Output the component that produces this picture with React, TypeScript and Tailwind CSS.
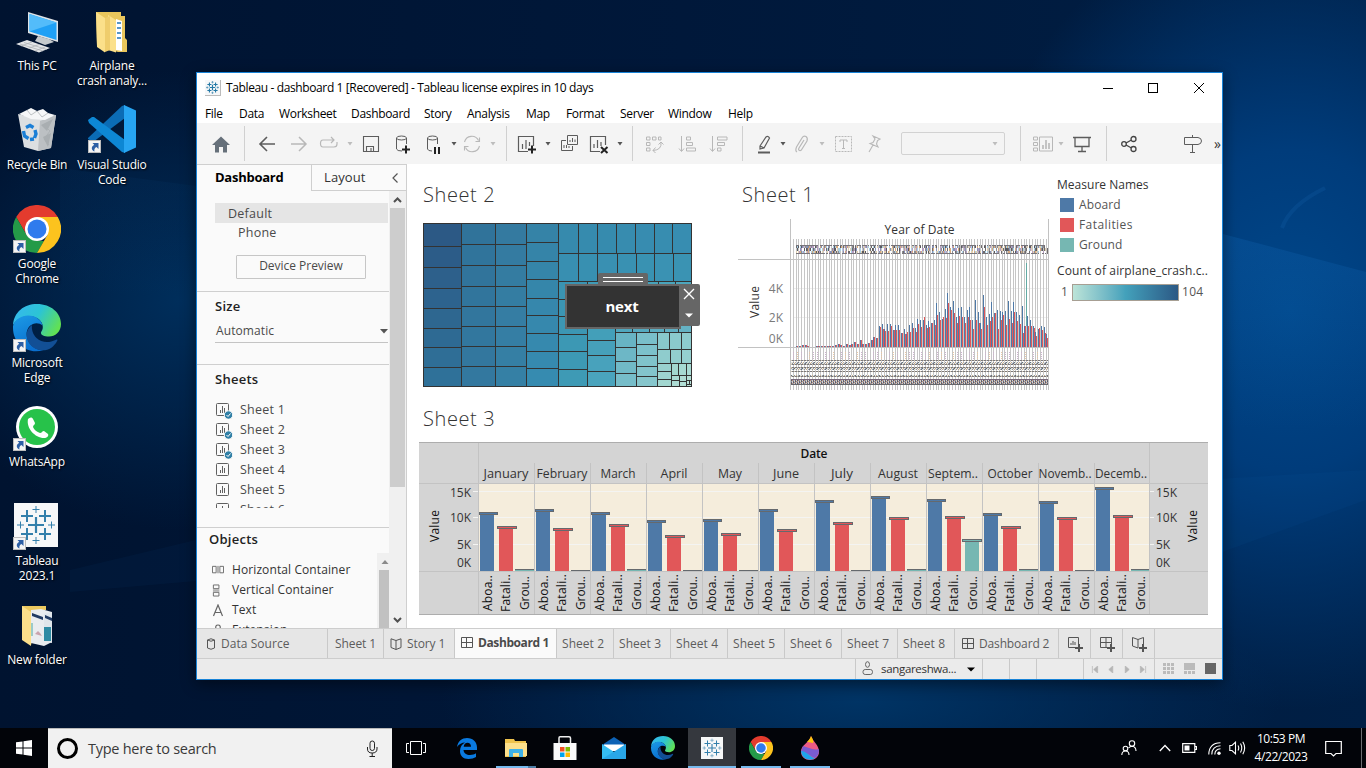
import React from "react";

/* ---------- shared icons ---------- */

const PLUS_MARKS: [number, number, number, number][] = [
  [22, 22, 8, 2.2], [13, 13, 6, 2], [31, 13, 6, 2], [13, 31, 6, 2], [31, 31, 6, 2],
  [22, 6.5, 3.5, 1], [22, 37.5, 3.5, 1], [6.5, 22, 3.5, 1], [37.5, 22, 3.5, 1],
];

function TableauMark({ className, color = "#337fab", weight = 1 }: { className: string; color?: string; weight?: number }) {
  return (
    <svg viewBox="0 0 44 44" className={className}>
      <rect width="44" height="44" fill="#f6f7f8" />
      {PLUS_MARKS.map(([x, y, r, w], i) => (
        <path key={i} d={`M${x - r} ${y}H${x + r}M${x} ${y - r}V${y + r}`} stroke={color} strokeWidth={w * weight} />
      ))}
    </svg>
  );
}

function ChromeIcon({ className }: { className: string }) {
  return (
    <svg viewBox="0 0 48 48" className={className}>
      <path d="M3.2 12A24 24 0 0 1 44.8 12H24L13.6 30Z" fill="#e33b2e" />
      <path d="M3.2 12 13.6 30 24 36H31L24 48A24 24 0 0 1 3.2 12Z" fill="#249a48" />
      <path d="M34.4 30 24 48A24 24 0 0 0 44.8 12H24Z" fill="#fcc31e" />
      <circle cx="24" cy="24" r="12" fill="#fff" />
      <circle cx="24" cy="24" r="9.5" fill="#2f7bed" />
    </svg>
  );
}

function EdgeIcon({ className, id }: { className: string; id: string }) {
  return (
    <svg viewBox="0 0 48 48" className={className}>
      <defs>
        <linearGradient id={`${id}a`} x1="0" x2="1" y1="0.2" y2="0.6">
          <stop offset="0" stopColor="#35b8ee" />
          <stop offset="0.5" stopColor="#2cc4d4" />
          <stop offset="1" stopColor="#62e152" />
        </linearGradient>
        <linearGradient id={`${id}b`} x1="0" x2="0.4" y1="0" y2="1">
          <stop offset="0" stopColor="#1c9be6" />
          <stop offset="1" stopColor="#0a6fcf" />
        </linearGradient>
      </defs>
      <path d="M0 21C1 8 11 0 24 0c14 0 24 9 24 20 0 8-6 12.500-12 12.500-5 0-8-1.500-8-3.500 0-1.500 1.800-2.500 1.800-6C29.800 17 24 12 16 12 9 12 3 16 0 21Z" fill={`url(#${id}a)`} />
      <path d="M0 22c2-7 9-10.500 15-10.500 8 0 14 5 14.500 10C27 19.500 23.500 18.500 20 20c-5 2-8 8-5.500 15 2.500 7 9 11.500 16 11C16 51 0 41 0 24Z" fill={`url(#${id}b)`} />
      <path d="M19 21c-6 4-7 12-3 18 5 8 16 9 22 5 3-2 6-6 6.500-8-.5-.8-1.500-.3-2 0-6 3-14 3-19-2-4-4-5-9-4.500-13Z" fill="#124f95" />
    </svg>
  );
}

function ShortcutArrow() {
  return (
    <svg viewBox="0 0 13 13" className="absolute bottom-0 left-0 h-[13px] w-[13px]">
      <rect x=".5" y=".5" width="12" height="12" fill="#f4f4f4" stroke="#bcbcbc" />
      <path d="M4.500 3h6v6L8.500 7C6.500 8 6 9.500 6.500 11.500 3.500 10.500 2.500 7 6.200 4.800Z" fill="#2d5fa5" />
    </svg>
  );
}

function DesktopIcon({ className, shortcut, tight, label, children }: { className: string; shortcut?: boolean; tight?: boolean; label: string[]; children: React.ReactNode }) {
  return (
    <div className={`absolute flex w-[76px] flex-col items-center ${className}`}>
      <div className="relative h-12 w-12">
        {children}
        {shortcut && <ShortcutArrow />}
      </div>
      <div className={`text-center text-[12px] leading-[15px] tracking-[-0.2px] whitespace-nowrap text-white [text-shadow:1px_1px_2px_#000] ${tight ? "mt-[3px]" : "mt-1"}`}>
        {label.map((l) => (
          <div key={l}>{l}</div>
        ))}
      </div>
    </div>
  );
}

function Desktop() {
  return (
    <>
      <DesktopIcon className="top-[6px] left-[-1px]" label={["This PC"]}>
        <svg viewBox="0 0 48 48" className="h-12 w-12">
          <path d="M15 6 45 15V36L15 27Z" fill="#dfe3e6" />
          <path d="M16.500 8 43.500 16.500V34L16.500 25.500Z" fill="#1fa0f5" />
          <path d="M16.500 8 43.500 16.500 16.500 25.500Z" fill="#53bcfa" />
          <path d="M25 30 36 33 41 36 32 39 22 35Z" fill="#c5cacd" />
          <path d="M3 38 14 34 37 42 26 46.500Z" fill="#e4e6e8" />
          <path d="M7 38 30 45M11 36.500 34 43.500M8 40 19 36M15 42.500 26 38.500M22 45 32 41" stroke="#a9adb1" strokeWidth=".7" />
        </svg>
      </DesktopIcon>
      <DesktopIcon className="top-[6px] left-[74px]" label={["Airplane", "crash analy..."]}>
        <svg viewBox="0 0 48 48" className="h-12 w-12">
          <path d="M8 6H33V10H37V32L39 34V46H30L9 40Z" fill="#e9c65c" />
          <path d="M28 13 34 15V45L28 44Z" fill="#fff" />
          <path d="M29 17h4M29 22h4M29 27h4M29 32h4" stroke="#5796c7" strokeWidth="2" />
          <path d="M20 9 28 14V46.500L20 44Z" fill="#fbe08a" />
          <path d="M8 6 17 12V46.500L9 41Z" fill="#fbe08a" />
          <path d="M17 12 22 10V44L17 46Z" fill="#efcd6c" />
        </svg>
      </DesktopIcon>
      <DesktopIcon className="top-[105px] left-[-1px]" label={["Recycle Bin"]}>
        <svg viewBox="0 0 48 48" className="h-12 w-12">
          <path d="M5 9 24 14 43 10 38 43 25 46 11 42Z" fill="#dcdfe1" />
          <path d="M27 16 43 10 38 43 25 46Z" fill="#bcc0c3" />
          <path d="M6 9 14 5 18 3 24 6 30 4 35 8 42 10 32 15 18 14Z" fill="#f6f7f8" />
          <path d="M14 5 18 10 24 6 29 12 35 8M31 20 37 26 31 34 36 40" fill="none" stroke="#a6abae" strokeWidth=".7" />
          <path d="M28 20 40 14 34 26ZM30 32 38 28 35 42Z" fill="#a9aeb1" />
          <path d="M13 22.500 17 20.500 20.500 22.500M22 25 23 29 21.500 33M10.500 26 11.500 31 15.500 33.500M17 34.500 21 34" fill="none" stroke="#1b7fd6" strokeWidth="3.400" />
        </svg>
      </DesktopIcon>
      <DesktopIcon className="top-[105px] left-[74px]" shortcut label={["Visual Studio", "Code"]}>
        <svg viewBox="0 0 48 48" className="h-12 w-12">
          <path d="M0 33 34 1 37 0V13L5 37 0 34Z" fill="#0b6cb5" />
          <path d="M0 15 4 12H6L37 35V48L34 47 1 18Z" fill="#0d87d4" />
          <path d="M36 0 48 5.500V42.500L36 48Z" fill="#27a5f2" />
        </svg>
      </DesktopIcon>
      <DesktopIcon className="top-[205px] left-[-1px]" shortcut tight label={["Google", "Chrome"]}>
        <ChromeIcon className="h-12 w-12" />
      </DesktopIcon>
      <DesktopIcon className="top-[304px] left-[-1px]" shortcut tight label={["Microsoft", "Edge"]}>
        <EdgeIcon className="h-12 w-12" id="desk" />
      </DesktopIcon>
      <DesktopIcon className="top-[403px] left-[-1px]" shortcut tight label={["WhatsApp"]}>
        <svg viewBox="0 0 48 48" className="h-12 w-12">
          <circle cx="24" cy="24" r="21" fill="#fff" />
          <circle cx="24" cy="24" r="18" fill="#27c24a" />
          <path d="M15 16c2-2 4-2 5 0l2 4c0 2-2 2-2 4 1 3 4 5 7 6 2 0 2-2 4-2l4 3c1 2-1 4-4 4-9 0-18-10-16-19Z" fill="#fff" />
        </svg>
      </DesktopIcon>
      <DesktopIcon className="top-[502px] left-[-1px]" shortcut tight label={["Tableau", "2023.1"]}>
        <TableauMark className="mt-px ml-px h-11 w-11" />
      </DesktopIcon>
      <DesktopIcon className="top-[601px] left-[-1px]" tight label={["New folder"]}>
        <svg viewBox="0 0 48 48" className="h-12 w-12">
          <path d="M9 5H33V9H28L18 44 9 38Z" fill="#ecc95f" />
          <path d="M18 9 28 8 39 11V41L31 45 18 42Z" fill="#e9ecef" />
          <path d="M31 13 39 11V42L31 40Z" fill="#dfe5ea" />
          <path d="M19 12 30 16V19L19 15ZM32 14 39 17V20L32 17Z" fill="#213a63" />
          <path d="M31 26H38V40H31Z" fill="#2f8ba4" />
          <path d="M19 22V35" stroke="#7fc0bd" strokeWidth="1.500" />
          <path d="M22 33 25 30 27 32 29 35Z" fill="#c9a3ad" />
          <path d="M9 5 18 11V45L9 39Z" fill="#fbdf8b" />
        </svg>
      </DesktopIcon>
    </>
  );
}

/* ---------- window chrome ---------- */

function TitleBar() {
  return (
    <div className="flex h-[30px] shrink-0 items-center bg-white pl-2 text-[12px] text-black">
      <TableauMark className="h-[16px] w-[16px] border-r border-b border-[#bbb]" color="#2378a6" weight={1.6} />
      <span className="ml-[5px] text-[12px] tracking-[-0.38px] whitespace-nowrap">Tableau - dashboard 1 [Recovered] - Tableau license expires in 10 days</span>
      <div className="ml-auto flex pr-[17px]">
        <svg className="mr-[33px] h-3 w-3" viewBox="0 0 12 12"><path d="M1 6.500H11" stroke="#000" /></svg>
        <svg className="mr-[34px] h-3 w-3" viewBox="0 0 12 12"><rect x="1.500" y="1.500" width="9" height="9" fill="none" stroke="#000" /></svg>
        <svg className="h-3 w-3" viewBox="0 0 12 12"><path d="M1 1 11 11M11 1 1 11" stroke="#000" /></svg>
      </div>
    </div>
  );
}

function MenuBar() {
  const items: [string, string][] = [
    ["File", "w-[34px]"], ["Data", "w-[40px]"], ["Worksheet", "w-[72px]"], ["Dashboard", "w-[73px]"], ["Story", "w-[43px]"],
    ["Analysis", "w-[59px]"], ["Map", "w-[40px]"], ["Format", "w-[54px]"], ["Server", "w-[48px]"], ["Window", "w-[60px]"], ["Help", "w-[40px]"],
  ];
  return (
    <div className="flex h-5 shrink-0 items-center bg-white pt-[2px] pl-2 text-[12px] tracking-[-0.32px] text-black">
      {items.map(([t, w]) => (
        <span key={t} className={`shrink-0 ${w}`}>{t}</span>
      ))}
    </div>
  );
}

function Ico({ ml, children, tone = "dark" }: { ml: string; children: React.ReactNode; tone?: "dark" | "dim" }) {
  return (
    <svg viewBox="0 0 20 20" className={`h-5 w-5 shrink-0 fill-none stroke-current ${tone === "dark" ? "text-[#5c5c5c]" : "text-[#b8b8b8]"} ${ml}`}>
      {children}
    </svg>
  );
}

function Caret({ ml, dim }: { ml: string; dim?: boolean }) {
  return (
    <svg viewBox="0 0 6 4" className={`h-1 w-[6px] shrink-0 ${ml}`}>
      <path d="M.5 0h5L3 3.500Z" fill={dim ? "#bdbdbd" : "#555"} />
    </svg>
  );
}

function Sep({ ml }: { ml: string }) {
  return <div className={`h-[35px] w-px shrink-0 bg-[#d0d0d0] ${ml}`} />;
}

function Toolbar() {
  return (
    <div className="flex h-[41px] shrink-0 items-center overflow-hidden bg-[#f4f4f4]">
      <Ico ml="ml-[14px]"><path d="M10 2.500 19 11H16V18.500H12V13H8V18.500H4V11H1Z" fill="#66707a" stroke="none" /></Ico>
      <Sep ml="ml-[13px]" />
      <Ico ml="ml-3"><path d="M18 10H3M10 3 3 10 10 17" strokeWidth="1.600" /></Ico>
      <Ico ml="ml-3" tone="dim"><path d="M2 10H17M10 3 17 10 10 17" strokeWidth="1.500" /></Ico>
      <Ico ml="ml-[10px]" tone="dim"><path d="M15 6H4Q1.500 6 1.500 9.500 1.500 13 4 13H15Q18 13 18 10V8M12 3 15 6 12 9" strokeWidth="1.200" /></Ico>
      <Caret ml="ml-2" dim />
      <Ico ml="ml-2"><path d="M2.500 2.500H17.500V17.500H2.500ZM5.500 17V12.500H12.500V17M10 14V17" strokeWidth="1.100" /></Ico>
      <Ico ml="ml-[13px]"><ellipse cx="7.500" cy="4" rx="5" ry="2" /><path d="M2.500 4V15Q3 17 8 17M12.500 4V10" /><path d="M8 15.500H16M12 11.500V19.500" stroke="#222" strokeWidth="2" /></Ico>
      <Ico ml="ml-[11px]"><ellipse cx="7.500" cy="4" rx="5" ry="2" /><path d="M2.500 4V15Q3 17 7 17M12.500 4V10" /><path d="M10 13V20M14 13V20" stroke="#222" strokeWidth="2" /></Ico>
      <Caret ml="ml-[6px]" />
      <Ico ml="ml-[5px]" tone="dim"><path d="M2.500 8A7.500 7.500 0 0 1 16.500 6.500M17.500 12A7.500 7.500 0 0 1 3.500 13.500M17.500 3.500V7.500H13.500M2.500 16.500V12.500H6.500" strokeWidth="1.100" /></Ico>
      <Caret ml="ml-2" dim />
      <Sep ml="ml-[10px]" />
      <Ico ml="ml-[10px]"><path d="M11 17.500H1.500V2.500H16.500V12M5.500 15V10M9 15V6M12.500 12V8" strokeWidth="1.200" /><path d="M11 15.500H19M15 11.500V19.500" stroke="#222" strokeWidth="2" /></Ico>
      <Caret ml="ml-2" />
      <Ico ml="ml-2"><path d="M8.500 1.500H18.500V10.500H8.500ZM7 6.500H2.500V16.500H13.500V12M11 8V6M13.500 8V4M16 8V5.500M5 14V11M7.500 14V11M10 14V12" /></Ico>
      <Ico ml="ml-[10px]"><path d="M11 17.500H1.500V2.500H16.500V11M5 14V10M8.500 14V6M12 12V8" strokeWidth="1.200" /><path d="M12 13 18.500 19M18.500 13 12 19" stroke="#222" strokeWidth="2" /></Ico>
      <Caret ml="ml-2" />
      <Sep ml="ml-[9px]" />
      <Ico ml="ml-3" tone="dim"><path d="M1.500 3H5V6H1.500ZM7.500 3H11V6H7.500ZM13.500 3H16V6H13.500ZM1.500 8.500H5V11.500H1.500ZM1.500 14H5V17H1.500ZM16 8Q17 16 8 16.500M13.500 10.500 16 8 18.500 10.500M10.500 13.500 8 16.500 10.500 19" /></Ico>
      <Ico ml="ml-3" tone="dim"><path d="M4.500 2V17M2 14.500 4.500 17.500 7 14.500M9.500 3H13.500V6H9.500ZM9.500 8.500H15.500V11.500H9.500ZM9.500 14H18.500V17H9.500Z" /></Ico>
      <Ico ml="ml-3" tone="dim"><path d="M3.500 2V17M1 14.500 3.500 17.500 6 14.500M8.500 3H18V6H8.500ZM8.500 8.500H15.500V11.500H8.500ZM8.500 14H12V17H8.500Z" /></Ico>
      <Sep ml="ml-[13px]" />
      <Ico ml="ml-3"><path d="M5 12 11 3Q13 1.500 14.500 4L9 14 5 15ZM5 12 9 14" strokeWidth="1.200" /><path d="M3 18.500H15" strokeWidth="2" /></Ico>
      <Caret ml="ml-[5px]" />
      <Ico ml="ml-[6px]" tone="dim"><path d="M12 6 7 14Q6 16 7.500 16.500 9 17 10 15L15 7Q16 4 14 2.500 11.500 1.500 10 4L4.500 13Q3 17 5 18" strokeWidth="1.200" /></Ico>
      <Caret ml="ml-[7px]" dim />
      <Ico ml="ml-2" tone="dim"><path d="M2.500 2.500H18.500V17.500H2.500Z" strokeDasharray="2 1" /><path d="M7 8V6H14V8M10.500 6V14.500M9 14.500H12" /></Ico>
      <Ico ml="ml-[12px]" tone="dim"><path d="M8 2 15 5 12.500 6.500 11.500 10 13 13 5 9.500 8 8.500 10 5ZM8 11 4 18" strokeWidth="1.100" /></Ico>
      <div className="ml-4 flex h-[23px] w-[104px] shrink-0 items-center justify-end rounded-[2px] border border-[#d2d2d2] pr-[6px]"><Caret ml="ml-0" dim /></div>
      <Sep ml="ml-[15px]" />
      <Ico ml="ml-3" tone="dim"><path d="M.5 3H4.500V6H.5ZM.5 8.500H4.500V11.500H.5ZM.5 14H4.500V17H.5ZM6.500 3H19.500V17H6.500Z" /><path d="M10 15V11M13 15V6M16 15V9" strokeWidth="1.600" /></Ico>
      <Caret ml="ml-[5px]" dim />
      <Ico ml="ml-[8px]"><path d="M1 3.500H19M3 4V12.500H17V4M10 13V17.500M6 17.500H14" strokeWidth="1.300" /></Ico>
      <Sep ml="ml-[14px]" />
      <Ico ml="ml-3"><g stroke="#444" strokeWidth="1.300"><circle cx="5" cy="10" r="2.300" /><circle cx="14.500" cy="5" r="2.500" /><circle cx="14.500" cy="15" r="2.500" /><path d="M7 9 12 6.200M7 11 12 13.800" /></g></Ico>
      <Ico ml="ml-11"><path d="M1.500 3.500H15Q18.500 4 18.500 7 18.500 10 15 10.500H1.500ZM9.500 1V3.500M9.500 11V18.500M7 18.500H12" /></Ico>
      <span className="ml-[11px] w-[10px] text-[14px] leading-none text-[#333]">»</span>
    </div>
  );
}

/* ---------- side pane ---------- */

function SheetGlyph({ used }: { used?: boolean }) {
  return (
    <svg viewBox="0 0 17 18" className="h-[18px] w-[17px] shrink-0">
      <rect x=".5" y="2.500" width="12" height="12" rx="1" fill="none" stroke="#5f5f5f" />
      <path d="M4.500 12V9M6.500 12V5M8.500 12V7" stroke="#5f5f5f" />
      {used && <><circle cx="12.500" cy="14" r="4.200" fill="#2f7fa6" stroke="#fafafa" /><path d="M10.500 14 12 15.500 14.500 12.500" fill="none" stroke="#fff" /></>}
    </svg>
  );
}

function SidePane() {
  return (
    <div className="flex w-[210px] shrink-0 flex-col border-t border-r border-[#cfcfcf] bg-[#fafafa]">
      <div className="flex h-[26px] shrink-0">
        <div className="w-[114px] pl-[18px] text-[13px] leading-[25px] font-bold tracking-[-0.25px] text-black">Dashboard</div>
        <div className="flex flex-1 items-center justify-between border-b border-l border-[#cfcfcf] pr-[7px] pl-3 text-[13px] tracking-[0.1px] text-[#333]">
          <span>Layout</span>
          <svg viewBox="0 0 8 12" className="h-3 w-2"><path d="M6.500 1.500 2 6 6.500 10.500" fill="none" stroke="#555" strokeWidth="1.200" /></svg>
        </div>
      </div>
      <div className="flex min-h-0 flex-1">
        <div className="flex w-[192px] shrink-0 flex-col overflow-hidden text-[12.500px] tracking-[0.25px] text-[#4a4a4a]">
          <div className="mt-[12px] mr-px ml-[18px] h-5 shrink-0 bg-[#e5e5e5] pl-[13px] leading-[21px]">Default</div>
          <div className="h-5 shrink-0 pl-[41px] leading-5">Phone</div>
          <div className="mt-3 ml-[39px] h-6 w-[130px] shrink-0 rounded-[1px] border border-[#c6c6c6] text-center text-[12px] leading-[20px] tracking-[-0.02px]">Device Preview</div>
          <div className="mt-3 h-[74px] shrink-0 border-y border-[#cfcfcf] pt-[5px] pl-[18px]">
            <div className="text-[13px] leading-[18px] font-semibold text-[#222]">Size</div>
            <div className="mt-[5px] mr-px flex h-[23px] items-center justify-between border-b border-[#c4c4c4] pl-px text-[12px] tracking-[0.1px]">
              <span className="leading-[20px]">Automatic</span>
              <svg viewBox="0 0 8 5" className="h-[5px] w-2"><path d="M0 0h8L4 4.500Z" fill="#555" /></svg>
            </div>
          </div>
          <div className="h-[163px] shrink-0 border-b border-[#cfcfcf] pt-[5px] pl-[18px]">
            <div className="text-[13px] leading-[18px] font-semibold text-[#222]">Sheets</div>
            <div className="mt-[12px] h-[108px] overflow-hidden">
              {[1, 2, 3, 4, 5, 6].map((n) => (
                <div key={n} className="flex h-5 items-center gap-2 pl-px"><SheetGlyph used={n < 4} />
                  <span className="-ml-px leading-5">Sheet {n}</span>
                </div>
              ))}
            </div>
          </div>
          <div className="flex min-h-0 flex-1 flex-col">
            <div className="pt-px pl-3 text-[13px] leading-[20px] font-semibold text-[#222]">Objects</div>
            <div className="flex min-h-0 flex-1">
              <div className="mt-[11px] min-w-0 flex-1 overflow-hidden pl-[15px] text-[12px] tracking-[0.1px] whitespace-nowrap text-[#333]">
                <div className="flex h-5 items-center gap-2"><svg viewBox="0 0 13 13" className="h-[13px] w-3 shrink-0"><path d="M.5 2H4.500V9H.5ZM8.500 2H12.500V9H8.500Z" fill="none" stroke="#666" /><path d="M5 1.500H8V9.500H5Z" fill="#b5b5b5" /></svg>Horizontal Container</div>
                <div className="flex h-5 items-center gap-2"><svg viewBox="0 0 13 13" className="h-[13px] w-3 shrink-0"><path d="M1.500 .5H7.500V4.500H1.500ZM1.500 8.500H7.500V12.500H1.500Z" fill="none" stroke="#666" /><path d="M1 5H8V8H1Z" fill="#b5b5b5" /></svg>Vertical Container</div>
                <div className="flex h-5 items-center gap-2"><svg viewBox="0 0 12 13" className="h-[13px] w-3 shrink-0"><path d="M1.500 12 6 1 10.500 12M3 8.500H9" fill="none" stroke="#666" strokeWidth="1.200" /></svg>Text</div>
                <div className="flex h-5 items-center gap-2"><svg viewBox="0 0 12 13" className="h-[13px] w-3 shrink-0"><path d="M1 12V5H4Q3 1 6 1T8 5H11V12Z" fill="none" stroke="#666" strokeWidth="1.200" /></svg>Extension</div>
              </div>
              <div className="mt-[4px] flex w-3 shrink-0 flex-col bg-[#f0f0f0] pl-[2px]">
                <svg viewBox="0 0 10 17" className="h-[17px] w-[10px]"><path d="M2.500 11H9.500L6 7Z" fill="#8a8a8a" /></svg>
                <div className="flex-1 bg-[#c1c1c1]" />
              </div>
            </div>
          </div>
        </div>
        <div className="flex w-[17px] shrink-0 flex-col bg-[#f0f0f0] pr-px pl-px">
          <svg viewBox="0 0 15 17" className="h-[17px] w-[15px] shrink-0"><path d="M4 11 7.500 7.500 11 11" fill="none" stroke="#505050" strokeWidth="2" /></svg>
          <div className="h-[279px] shrink-0 bg-[#cdcdcd]" />
          <svg viewBox="0 0 15 17" className="mt-auto h-[17px] w-[15px] shrink-0"><path d="M4 7 7.500 10.500 11 7" fill="none" stroke="#505050" strokeWidth="2" /></svg>
        </div>
      </div>
    </div>
  );
}

/* ---------- treemap ---------- */

type Cell = [number, number, number, number, string];

function mix(a: string, b: string, t: number) {
  const p = (s: string, i: number) => parseInt(s.slice(i, i + 2), 16);
  return "rgb(" + [1, 3, 5].map((i) => Math.round(p(a, i) + (p(b, i) - p(a, i)) * t)).join(",") + ")";
}

function stack(x0: number, x1: number, ys: number[], a: string, b: string): Cell[] {
  return ys.slice(1).map((y, i) => [x0, ys[i], x1 - x0, y - ys[i], mix(a, b, i / Math.max(1, ys.length - 2))]);
}

function strip(y0: number, y1: number, xs: number[], a: string, b: string): Cell[] {
  return xs.slice(1).map((x, i) => [xs[i], y0, x - xs[i], y1 - y0, mix(a, b, i / Math.max(1, xs.length - 2))]);
}

const CELLS: Cell[] = [
  ...stack(0, 38, [0, 23, 44, 65, 85, 105, 124, 144, 163], "#2c5985", "#2f7199"),
  ...stack(38, 72, [0, 21, 42, 63, 83, 103, 123, 143, 163], "#30739a", "#33789f"),
  ...stack(72, 103, [0, 21, 42, 63, 83, 103, 123, 143, 163], "#347aa0", "#3580a5"),
  ...stack(103, 135, [0, 19, 38, 56, 75, 92, 110, 128, 145, 163], "#3583a7", "#368bb0"),
  ...strip(0, 30, [135, 155, 174, 193, 212, 231, 249, 268], "#368aad", "#378db1"),
  ...strip(30, 58, [135, 155, 174, 194, 213, 231, 250, 268], "#388fb1", "#3a93b3"),
  ...stack(135, 164, [58, 76, 93, 111, 128, 146, 163], "#3a94b2", "#3e9ab5"),
  ...stack(164, 192, [58, 82, 100, 117, 132, 148, 163], "#3f9bb6", "#4aa4bd"),
  ...strip(58, 85, [192, 209, 235, 252, 268], "#42a0b8", "#4da6bd"),
  ...strip(85, 109, [192, 209, 226, 241, 255, 268], "#50a7be", "#65b2c4"),
  ...stack(192, 213, [109, 124, 138, 150, 163], "#68b4c4", "#76bdc9"),
  ...stack(213, 234, [109, 121, 132, 143, 153, 163], "#79bfca", "#86c6cc"),
  ...strip(109, 126, [234, 246, 258, 268], "#88c8cc", "#8dcbce"),
  ...strip(126, 140, [234, 247, 258, 268], "#8fcccd", "#95cfcf"),
  ...stack(234, 248, [140, 148, 156, 163], "#99d1cf", "#a2d7d0"),
  ...strip(140, 152, [248, 255, 263, 268], "#a3d7d0", "#a8dad3"),
  ...stack(248, 256, [152, 157, 163], "#a9dad3", "#addcd4"),
  ...stack(256, 263, [152, 158, 163], "#aedcd4", "#b2dfd6"),
  ...stack(263, 268, [152, 157, 161, 163], "#b2dfd6", "#b9e3d9"),
  [263, 157, 3, 4, "#b9e3d9"],
];

function Treemap() {
  return (
    <div className="relative h-[164px] w-[269px]">
      <svg viewBox="0 0 269 164" className="h-[164px] w-[269px]">
        {CELLS.map(([x, y, w, h, f], i) => (
          <rect key={i} x={x + 0.5} y={y + 0.5} width={w} height={h} fill={f} stroke="#333" />
        ))}
      </svg>
      <div className="absolute top-[50px] left-[142px] w-[135px]">
        <div className="ml-[33px] flex h-[12px] w-[50px] flex-col justify-center gap-[3px] rounded-t-[2px] bg-[#666] px-[5px]">
          <div className="h-px bg-white" />
          <div className="h-px bg-white" />
        </div>
        <div className="-mt-px flex">
          <div className="h-[45px] w-[116px] border-2 border-[#666] bg-[#333] pr-[2px] text-center text-[15px] leading-[41px] font-bold tracking-[-0.2px] text-white">next</div>
          <div className="-ml-[2px] flex h-[42px] w-[21px] flex-col items-center justify-between rounded-r-[2px] bg-[#666] py-1 pr-[2px]">
            <svg viewBox="0 0 12 12" className="h-3 w-3"><path d="M1 1 11 11M11 1 1 11" stroke="#fff" strokeWidth="1.400" /></svg>
            <svg viewBox="0 0 8 8" className="mb-[2px] h-2 w-2"><path d="M0 1.500h8L4 5.500Z" fill="#fff" /></svg>
          </div>
        </div>
      </div>
    </div>
  );
}

/* ---------- yearly chart ---------- */

const EARLY = [0, 0, 1, 1, 2, 2, 1, 0, 0, 1, 1, 1, 1, 1, 1, 1, 2, 3, 2, 1, 3, 2, 3, 5, 3, 7, 3, 3, 4, 7, 10, 9];
const BLUE = [21, 23, 18, 23, 23, 17, 22, 22, 14, 18, 13, 22, 24, 19, 28, 27, 27, 22, 26, 24, 27, 44, 35, 28, 38, 54, 40, 46, 30, 39, 40, 30, 37, 40, 27, 47, 35, 24, 52, 30, 33, 45, 34, 37, 36, 35, 36, 46, 36, 45, 35, 32, 41, 21, 31, 27, 21, 15, 18, 21, 20, 13];
const RED = [20, 18, 16, 16, 21, 17, 17, 17, 14, 13, 15, 15, 19, 15, 23, 20, 30, 19, 20, 24, 22, 32, 27, 30, 29, 44, 37, 34, 24, 31, 30, 24, 30, 27, 18, 27, 24, 18, 40, 22, 26, 30, 34, 18, 27, 32, 22, 28, 24, 35, 26, 23, 14, 21, 21, 21, 19, 11, 19, 17, 14, 9];
const SMEAR = ["#6f6a6a", "#8793b8", "#d8a87c", "#8c8c92", "#a9d0e6", "#e2cfae", "#59595f", "#b59bc0"];

function YearChart() {
  const x = (i: number) => Math.round(52 + i * 2.745);
  const n = EARLY.length + BLUE.length;
  const seed = (a: number) => Math.abs(Math.floor(Math.sin(a * 12.9898) * 43758.5453));
  return (
    <svg viewBox="0 0 312 172" className="h-[172px] w-[312px] font-['Open_Sans',sans-serif]" shapeRendering="crispEdges">
      <path d="M56 69.500H310M56 98.500H310" stroke="#eee" />
      {Array.from({ length: n }, (_, i) => (
        <rect key={i} x={x(i) + 3} y={20} width={1} height={151} fill="#c6c6c6" />
      ))}
      {EARLY.map((h, i) => (
        <g key={i}>
          <rect x={x(i) + 1} y={128 - h} width={1} height={h} fill="#4e79a7" />
          <rect x={x(i) + 2} y={128 - h} width={1} height={h} fill="#e15759" />
        </g>
      ))}
      {BLUE.map((h, i) => (
        <g key={i}>
          <rect x={x(i + 32) + 1} y={128 - h} width={1} height={h} fill="#4e79a7" />
          <rect x={x(i + 32) + 2} y={128 - RED[i]} width={1} height={RED[i]} fill="#e15759" />
        </g>
      ))}
      <rect x="288" y="44" width="1" height="63" fill="#62aaa4" />
      {Array.from({ length: 252 }, (_, i) =>
        [26, 27, 28, 29, 30, 31, 32, 33, 34].map((y, k) => {
          const s = seed(i * 17 + Math.floor(k / 3) * 5);
          const edge = k === 0 || k === 8;
          return s % 10 < (edge ? 8 : 6) ? <rect key={`${i}-${y}`} x={58 + i} y={y} width={1} height={1} fill={edge ? "#77747a" : SMEAR[s % 8]} /> : null;
        })
      )}
      {Array.from({ length: 258 }, (_, i) =>
        [133, 135, 137, 139].map((y) => (i % 16 === 6 || i % 16 === 10 || i % 16 === 2 ? <rect key={`${i}-${y}`} x={53 + i} y={y} width={1} height={1} fill={i % 3 ? "#cdb2cf" : "#ecc9a4"} /> : null))
      )}
      {Array.from({ length: 258 }, (_, i) =>
        [141, 143, 144, 145, 148, 149, 150, 152, 156, 157].map((y, k) => {
          const c = i % 8;
          const dark = y === 141 || y === 145 || y === 148 || y === 152 || y === 157;
          const fill = dark ? (i % 3 ? "#78787c" : "#c9bda9") : ["#6d6d72", "#cfe6f2", "#f2e2c4", "#8a93a8", "#f7f4ec", "#c9a98a", "#d9eef6", "#a5a5ad"][(c + k) % 8];
          return <rect key={`${i}-${y}`} x={53 + i} y={y} width={1} height={1} fill={fill} />;
        })
      )}
      {Array.from({ length: 258 }, (_, i) =>
        [160, 161, 162, 163, 164, 165].map((y, k) => {
          const fill = k === 0 ? "#77687a" : k === 5 ? "#66666b" : ["#6b6370", "#c9d3db", "#5c5c63", "#b98f7c", "#8f9ab4", "#d9cdb8"][(i + k * 2) % 6];
          return <rect key={`${i}-${y}`} x={53 + i} y={y} width={1} height={1} fill={fill} />;
        })
      )}
      <path d="M52.500 0V171M310.500 0V171M0 40.500H311M0 128.500H311" stroke="#c2c2c2" fill="none" />
      <text x="181.500" y="15" textAnchor="middle" fontSize="12" textLength="70" fill="#333">Year of Date</text>
      <g fontSize="12" fill="#7a7a7a" textAnchor="end">
        <text x="45" y="74">4K</text>
        <text x="45" y="103">2K</text>
        <text x="45" y="124">0K</text>
      </g>
      <text transform="translate(20.500 83) rotate(-90)" textAnchor="middle" fontSize="12" textLength="32" fill="#333">Value</text>
    </svg>
  );
}

function Legend() {
  const rows: [string, string][] = [["Aboard", "bg-[#4e79a7]"], ["Fatalities", "bg-[#e15759]"], ["Ground", "bg-[#76b7b2]"]];
  return (
    <div className="pt-[11px] text-[12px] text-[#333]">
      <div className="h-5 leading-5 tracking-[0.02px]">Measure Names</div>
      {rows.map(([t, c]) => (
        <div key={t} className={`flex h-5 items-center gap-[5px] pl-[3px] text-[#555] ${t === "Fatalities" ? "tracking-[0.42px]" : "tracking-[0.1px]"}`}>
          <div className={`h-[14px] w-[14px] ${c}`} />
          {t}
        </div>
      ))}
      <div className="mt-[6px] h-5 leading-5 tracking-[0.12px] whitespace-nowrap">Count of airplane_crash.c..</div>
      <div className="mt-[2px] flex h-[18px] items-center pl-1 text-[#555]">
        <span className="w-[11px]">1</span>
        <div className="h-[17px] w-[107px] border border-[#a79f93] bg-linear-to-r from-[#bce4d8] via-[#43a1bb] to-[#2c5985]" />
        <span className="ml-[3px] tracking-[0.3px]">104</span>
      </div>
    </div>
  );
}

/* ---------- monthly chart ---------- */

const MONTHS: [string, number, number, number][] = [
  ["January", 70, 84, 127], ["February", 67, 86, 128], ["March", 70, 82, 127], ["April", 78, 93, 128],
  ["May", 77, 91, 128], ["June", 67, 87, 0], ["July", 58, 80, 128], ["August", 54, 75, 127],
  ["Septem..", 57, 74, 97], ["October", 71, 84, 127], ["Novemb..", 59, 75, 128], ["Decemb..", 45, 73, 127],
];
const MONTH_WIDTHS = [45, 51, 35, 27, 24, 26, 22, 40, 50, 45, 53, 52];

function MonthChart() {
  return (
    <svg viewBox="0 0 789 173" className="h-[173px] w-[789px] font-['Open_Sans',sans-serif]">
      <g shapeRendering="crispEdges">
        <rect width="789" height="173" fill="#d4d4d4" />
        <rect x="60" y="42" width="670" height="87" fill="#f5eddc" />
        <path d="M60 49.500H730M60 75.500H730M60 102.500H730M54 49.500H59M54 75.500H59M54 102.500H59M731 49.500H735M731 75.500H735M731 102.500H735" stroke="#f4f4f2" />
        {MONTHS.map(([m, b, r, g], i) => {
          const x = 59 + i * 56;
          return (
            <g key={m}>
              <rect x={x + 2} y={b + 2} width="14" height={127 - b} fill="#4e79a7" />
              <rect x={x + 21} y={r + 2} width="14" height={127 - r} fill="#e15759" />
              <rect x={x + 1.5} y={b + 0.5} width="18" height="2" fill="#4e79a7" stroke="#65696d" />
              <rect x={x + 19.5} y={r + 0.5} width="19" height="2" fill="#e15759" stroke="#65696d" />
              {g === 97 && <><rect x={x + 39} y="99" width="14" height="30" fill="#76b7b2" /><rect x={x + 36.5} y="97.500" width="19" height="2" fill="#76b7b2" stroke="#65696d" /></>}
              {g > 120 && <rect x={x + 37} y={g} width="19" height="1" fill="#65696d" />}
              {g === 127 && <rect x={x + 37} y="128" width="19" height="1" fill="#76b7b2" />}
            </g>
          );
        })}
        {MONTHS.map(([m], i) => (
          <rect key={m} x={59 + i * 56} y={i ? 21 : 0} width="1" height={i ? 151 : 172} fill="#c3c3c3" />
        ))}
        <path d="M730.500 0V172M0 41.500H789M0 129.500H789" stroke="#c3c3c3" />
        <path d="M0 .5H789M0 172.500H789" stroke="#adadad" />
      </g>
      <g fontSize="12" fill="#111">
        <text x="395" y="16" textAnchor="middle" fontWeight="600" textLength="27">Date</text>
        {MONTHS.map(([m], i) => {
          const c = 87 + i * 56 - (m.endsWith("..") ? 1 : 0);
          return (
            <g key={m}>
              <text x={c} y="36" textAnchor="middle" fill="#333" fontSize="12.500" textLength={MONTH_WIDTHS[i]} lengthAdjust="spacingAndGlyphs">{m}</text>
              {["Aboa..", "Fatali..", "Grou.."].map((t, k) => (
                <text key={t} transform={`translate(${59 + i * 56 + [14, 32, 51][k]} ${[169, 170, 168][k]}) rotate(-90)`} textLength={[36, 38, 34][k]}>{t}</text>
              ))}
            </g>
          );
        })}
        {["15K", "10K", "5K", "0K"].map((t, i) => (
          <g key={t} fill="#333">
            <text x="52" y={[55, 80, 107, 125][i]} textAnchor="end" textLength={i < 2 ? 21 : 14}>{t}</text>
            <text x="737" y={[55, 80, 107, 125][i]} textLength={i < 2 ? 21 : 14}>{t}</text>
          </g>
        ))}
        <text transform="translate(20 84) rotate(-90)" textAnchor="middle" textLength="32">Value</text>
        <text transform="translate(778 84) rotate(-90)" textAnchor="middle" textLength="32">Value</text>
      </g>
    </svg>
  );
}

function Canvas() {
  return (
    <div className="flex min-w-0 flex-1 flex-col bg-white">
      <div className="flex h-[232px] shrink-0">
        <div className="w-[331px] shrink-0 pl-4">
          <h2 className="h-[59px] text-[20px] leading-[62px] font-light tracking-[0.6px] text-[#333]">Sheet 2</h2>
          <Treemap />
        </div>
        <div className="w-[319px] shrink-0">
          <h2 className="h-[55px] pl-1 text-[20px] leading-[62px] font-light tracking-[0.6px] text-[#333]">Sheet 1</h2>
          <YearChart />
        </div>
        <Legend />
      </div>
      <h2 className="h-[46px] shrink-0 pl-4 text-[20px] leading-[46px] font-light tracking-[0.6px] text-[#333]">Sheet 3</h2>
      <div className="pl-3"><MonthChart /></div>
    </div>
  );
}

/* ---------- tabs and status ---------- */

function GridGlyph() {
  return <svg viewBox="0 0 12 12" className="h-3 w-3 shrink-0"><path d="M.5 .5H11.500V10.500H.5ZM5.500 .5V10.500M.5 5.500H11.500" fill="none" stroke="#555" /></svg>;
}

function BookGlyph() {
  return <svg viewBox="0 0 12 12" className="h-3 w-3 shrink-0"><path d="M6 2.500 1 .8V9.500L6 11.500 11 9.500V.8ZM6 2.500V11.500" fill="none" stroke="#555" /></svg>;
}

function NewTab({ kind }: { kind: "sheet" | "dash" | "story" }) {
  return (
    <svg viewBox="0 0 16 16" className="h-4 w-4">
      <g fill="none" stroke="#555">
        {kind === "sheet" && <path d="M8 11.500H1.500V1.500H11.500V8M4 9V7M6 9V5M8 9V6" />}
        {kind === "dash" && <path d="M8 11.500H1.500V1.500H12.500V8M7 1.500V11.500M1.500 6.500H12.500" />}
        {kind === "story" && <path d="M7 3.500 1.500 1.500V10L7 12V3.500L12.500 1.500V8" />}
        <path d="M8 12H16M12 8V16" strokeWidth="2" />
      </g>
    </svg>
  );
}

function TabStrip() {
  const cell = "flex shrink-0 items-center border-r border-[#c9c9c9] bg-[#e6e6e6]";
  return (
    <div className="flex h-[31px] shrink-0 border-y border-[#cdcdcd] bg-[#e6e6e6] text-[12px] tracking-[0.05px] text-[#5c5c5c]">
      <div className={`${cell} w-[131px] gap-[6px] pl-[10px]`}>
        <svg viewBox="0 0 8 12" className="h-3 w-2"><path d="M.5 2Q4-.5 7.500 2V10Q4 12.500 .5 10ZM.5 2Q4 4.500 7.500 2" fill="none" stroke="#555" /></svg>
        Data Source
      </div>
      <div className={`${cell} w-[56px] pl-[7px] tracking-[-0.1px]`}>Sheet 1</div>
      <div className={`${cell} w-[71px] gap-[5px] pl-[6px] tracking-[-0.1px]`}><BookGlyph />Story 1</div>
      <div className="flex w-[102px] shrink-0 items-center gap-[5px] border-r border-[#c9c9c9] bg-[#fafafa] pb-[2px] pl-[6px] font-bold tracking-[-0.4px] text-[#4a4a4a]"><GridGlyph />Dashboard 1</div>
      {[2, 3, 4, 5, 6, 7, 8].map((n) => (
        <div key={n} className={`${cell} ${n === 7 ? "w-[56px]" : "w-[57px]"} pl-[5px]`}>Sheet {n}</div>
      ))}
      <div className={`${cell} w-[104px] gap-[5px] pl-[7px] tracking-[-0.15px]`}><GridGlyph />Dashboard 2</div>
      <div className={`${cell} w-8 justify-center`}><NewTab kind="sheet" /></div>
      <div className={`${cell} w-8 justify-center`}><NewTab kind="dash" /></div>
      <div className={`${cell} w-8 justify-center`}><NewTab kind="story" /></div>
    </div>
  );
}

function StatusBar() {
  return (
    <div className="flex h-5 shrink-0 bg-[#ebebeb] text-[11.500px] text-[#333]">
      <div className="w-[659px] shrink-0 border-r border-[#c9c9c9]" />
      <div className="flex w-[127px] shrink-0 items-center border-r border-[#c9c9c9] pl-[6px]">
        <svg viewBox="0 0 11 14" className="mb-[3px] h-[14px] w-[11px]"><g fill="none" stroke="#666"><ellipse cx="5.500" cy="3.500" rx="2" ry="2.800" /><rect x="1" y="8.500" width="9.500" height="5" rx="2.200" /></g></svg>
        <span className="ml-2 tracking-[-0.32px]">sangareshwa...</span>
        <svg viewBox="0 0 8 5" className="mr-[7px] ml-auto h-[5px] w-2"><path d="M0 .5h8L4 4.500Z" fill="#000" /></svg>
      </div>
      <div className="w-[27px] shrink-0 border-r border-[#c9c9c9]" />
      <div className="w-[27px] shrink-0 border-r border-[#c9c9c9]" />
      <div className="w-[47px] shrink-0 border-r border-[#c9c9c9]" />
      <div className="flex w-[71px] shrink-0 items-center gap-2 border-r border-[#c9c9c9] pl-[7px]">
        {["M1 0V8M7 0 2.500 4 7 8Z", "M6 0 1.500 4 6 8Z", "M2 0 6.500 4 2 8Z", "M7 0V8M1 0 5.500 4 1 8Z"].map((d) => (
          <svg key={d} viewBox="0 0 8 8" className="h-[7px] w-2"><path d={d} fill="#b5b5b5" stroke="#b5b5b5" strokeWidth=".8" /></svg>
        ))}
      </div>
      <div className="flex items-center gap-[10px] pb-px pl-2">
        <svg viewBox="0 0 11 11" className="h-[11px] w-[11px]"><path d="M0 0H3V3H0ZM4 0H7V3H4ZM8 0H11V3H8ZM0 4H3V7H0ZM4 4H7V7H4ZM8 4H11V7H8ZM0 8H3V11H0ZM4 8H7V11H4ZM8 8H11V11H8Z" fill="#bbb" /></svg>
        <svg viewBox="0 0 11 11" className="h-[11px] w-[11px]"><path d="M0 0H11V7H0ZM0 8H3V11H0ZM4 8H7V11H4ZM8 8H11V11H8Z" fill="#bbb" /></svg>
        <div className="h-[11px] w-[11px] bg-[#666]" />
      </div>
    </div>
  );
}

/* ---------- taskbar ---------- */

function Task({ className, bar, children }: { className: string; bar?: string; children: React.ReactNode }) {
  return (
    <div className={`relative flex shrink-0 items-center justify-center ${className}`}>
      {children}
      {bar && <div className={`absolute bottom-0 h-[2px] bg-[#76b9ed] ${bar}`} />}
    </div>
  );
}

function Taskbar() {
  return (
    <div className="flex h-10 shrink-0 bg-[#020409]">
      <div className="flex w-12 shrink-0 items-center justify-center">
        <svg viewBox="0 0 16 16" className="h-4 w-4"><path d="M0 2.300 6.500 1.400V7.500H0ZM7.500 1.200 16 0V7.500H7.500ZM0 8.500H6.500V14.600L0 13.700ZM7.500 8.500H16V16L7.500 14.800Z" fill="#fff" /></svg>
      </div>
      <div className="flex w-[344px] shrink-0 items-center border-t border-[#b9b9b9] bg-[#f1f1f1] pr-[14px] pl-[9px]">
        <div className="h-[21px] w-[21px] rounded-full border-[3px] border-black" />
        <span className="ml-[10px] text-[14.500px] tracking-[-0.26px] text-[#3a3a3a]">Type here to search</span>
        <svg viewBox="0 0 12 18" className="ml-auto h-[18px] w-3"><g fill="none" stroke="#222"><rect x="4" y="1" width="4.500" height="9.500" rx="2.200" /><path d="M1.500 7V9Q1.500 13 6.200 13T11 9V7M6.200 13V16.500M3.500 16.500H9" /></g></svg>
      </div>
      <Task className="w-12">
        <svg viewBox="0 0 20 16" className="h-4 w-5"><path d="M4.500 1.500H15.500V14.500H4.500ZM3 3.500H.5V12.500H3M17 3.500H19.500V12.500H17" fill="none" stroke="#fff" /></svg>
      </Task>
      <Task className="ml-[3px] w-12">
        <svg viewBox="0 0 20 21" className="h-[21px] w-5"><path d="M0 9C1 3 5 0 10 0c6 0 10 4 10 9.500V12H6.500c.3 3.500 3 5 6.500 5 2.500 0 4.500-.8 6-1.700V19c-2 1.300-4.500 2-7.500 2C6 21 3 17.500 3 13c0-4 2-7 5-8.500C5 4.500 2 6 0 9Zm6.700-.3H14C14 6 12.500 4.700 10.500 4.700 8.500 4.700 7 6.200 6.700 8.700Z" fill="#0a7ae0" /></svg>
      </Task>
      <Task className="w-[49px]" bar="left-[5px] w-10 bg-linear-to-r from-[#76b9ed] from-80% to-[#4d7ea6] to-80%">
        <svg viewBox="0 0 22 18" className="h-[18px] w-[22px]"><path d="M0 0H9L10 2H21V18H0Z" fill="#efc34d" /><path d="M0 4H22V17H0Z" fill="#fde08c" /><path d="M4 18V11Q4 10 5 10H17Q18 10 18 11V18H14V14H8V18Z" fill="#3fb2e8" /></svg>
      </Task>
      <Task className="w-[49px]">
        <svg viewBox="0 0 24 24" className="h-6 w-6"><path d="M6 8V2Q6 .8 7 .8H16Q17.500.8 17.500 2V8" fill="none" stroke="#eee" strokeWidth="1.500" /><path d="M.5 7H23.500V24H.5Z" fill="#fafafa" /><path d="M7 11h4.500v4.500H7Z" fill="#f25022" /><path d="M12.500 11H17v4.500h-4.500Z" fill="#7fba00" /><path d="M7 16.500h4.500V21H7Z" fill="#00a4ef" /><path d="M12.500 16.500H17V21h-4.500Z" fill="#ffb900" /></svg>
      </Task>
      <Task className="w-[49px]">
        <svg viewBox="0 0 24 22" className="h-[22px] w-6"><path d="M0 8 12 0 24 8V12H0Z" fill="#0d62b5" /><path d="M2 7.500H22V14H2Z" fill="#fff" /><path d="M0 7 12 15 24 7V22H0Z" fill="#35bdf2" /><path d="M0 22 24 7V22Z" fill="#1f96e0" opacity=".55" /></svg>
      </Task>
      <Task className="w-[49px]"><EdgeIcon className="h-6 w-6" id="task" /></Task>
      <Task className="ml-px w-12 bg-[#35383e]" bar="left-0 w-12"><TableauMark className="h-[22px] w-[22px]" /></Task>
      <Task className="w-[50px]" bar="left-[5px] w-10"><ChromeIcon className="h-6 w-6" /></Task>
      <Task className="w-12" bar="left-[4px] w-10">
        <svg viewBox="0 0 18 24" className="h-6 w-[18px]">
          <path d="M10 0C12 6 18 9 18 15.500 18 21 14 24 9 24S0 21 0 15.500C0 9 8 7 10 0Z" fill="#ee5b86" />
          <path d="M10 0C12 3 13 6 12 7 9 6 7 6 6 6 8 4 9.500 2 10 0Z" fill="#fdc50c" />
          <path d="M2 10C7 11 12 15 17.800 13 18.500 18 16 21 14 22 9 20 5 16 0 16Z" fill="#7a5bd0" />
          <path d="M0 15C5 15 8 20 14 22.500 11 24.500 1 25 0 15Z" fill="#1fa4ec" />
        </svg>
      </Task>
      <div className="ml-auto flex shrink-0 items-center text-white">
        <svg viewBox="0 0 16 16" className="h-4 w-4"><g fill="none" stroke="#fff" strokeWidth="1.100"><circle cx="11" cy="3.500" r="2.700" /><circle cx="4.500" cy="8.500" r="2.300" /><path d="M.8 15Q1 11 4.500 11 8 11 8 15M7.500 8Q9 6.200 11 6.200 15 6.500 15 11" /></g></svg>
        <svg viewBox="0 0 12 8" className="ml-[22px] h-2 w-3"><path d="M.8 7 6 1.500 11.200 7" fill="none" stroke="#fff" strokeWidth="1.300" /></svg>
        <svg viewBox="0 0 15 10" className="ml-[11px] h-[10px] w-[15px]"><path d="M.7.7H12.800V9.300H.7ZM13 3.500H14.500V6.500H13" fill="none" stroke="#fff" strokeWidth="1.200" /><path d="M2.500 2.500H7.500V7.500H2.500Z" fill="#fff" /></svg>
        <svg viewBox="0 0 13 13" className="ml-[11px] h-[13px] w-[13px]"><g fill="none" stroke="#fff" strokeWidth="1.100"><path d="M.8 12.500Q1 1 12.500 .8M3.800 12.500Q4 4 12.500 3.800M6.800 12.500Q7 7 12.500 6.800" /></g><circle cx="11" cy="11.200" r="1.700" fill="#fff" /></svg>
        <svg viewBox="0 0 17 14" className="ml-[8px] h-[14px] w-[17px]"><path d="M.8 4.500H3L6.500 1.200V12.800L3 9.500H.8ZM9 4.500Q10.500 7 9 9.500M11.500 2.500Q14 7 11.500 11.500M13.800 .8Q17.500 7 13.800 13.200" fill="none" stroke="#fff" strokeWidth="1.100" /></svg>
        <div className="ml-[7px] w-[56px] text-center text-[12px] leading-[18px] tracking-[-0.45px] whitespace-nowrap">
          <div>10:53 PM</div>
          <div>4/22/2023</div>
        </div>
        <svg viewBox="0 0 17 17" className="ml-[16px] h-[17px] w-[17px]"><path d="M.7 1.500H16.300V13.500H11L8.500 16 6 13.500H.7Z" fill="none" stroke="#fff" strokeWidth="1.200" /></svg>
        <div className="mr-1 ml-[19px] h-10 w-px bg-[#6a6c70]" />
      </div>
    </div>
  );
}

function Wallpaper() {
  return (
    <svg viewBox="0 0 1366 728" className="absolute inset-0 h-[728px] w-[1366px]">
      <defs>
        <linearGradient id="beam" x1="0" x2="0" y1="0" y2="1">
          <stop offset="0" stopColor="#1a78cc" stopOpacity=".2" />
          <stop offset="1" stopColor="#1a78cc" stopOpacity="0" />
        </linearGradient>
      </defs>
      <path d="M1200 228 1366 272V430H1200Z" fill="url(#beam)" />
      <path d="M1200 480 1366 470V500L1200 560Z" fill="#0a62b0" opacity=".08" />
      <path d="M60 168 196 186V300H60Z" fill="url(#beam)" opacity=".25" />
      <path d="M70 592 196 581V540L70 570Z" fill="#1a78cc" opacity=".05" />
      <path d="M1282 228Q1290 205 1325 188" fill="none" stroke="#2a86d8" strokeOpacity=".12" strokeWidth="4" />
    </svg>
  );
}

export default function App() {
  return (
    <div className="relative flex h-[768px] w-[1366px] flex-col overflow-hidden bg-[#001431] font-['Open_Sans','Noto_Sans',sans-serif]">
      <div className="relative flex-1 bg-[radial-gradient(ellipse_330px_400px_at_1290px_310px,#00478a_0%,#003c7b_40%,transparent_100%),radial-gradient(ellipse_260px_230px_at_180px_300px,#002e5b_0%,transparent_100%),radial-gradient(ellipse_420px_130px_at_860px_700px,#003465_0%,transparent_100%),linear-gradient(90deg,#001330_0%,#00183a_50%,#001f45_100%)]">
        <Wallpaper />
        <Desktop />
        <div className="absolute top-[72px] left-[196px] flex h-[608px] w-[1027px] flex-col border border-[#1883d7] bg-white shadow-[0_4px_14px_rgba(0,0,0,0.45)]">
          <TitleBar />
          <MenuBar />
          <Toolbar />
          <div className="flex min-h-0 flex-1">
            <SidePane />
            <Canvas />
          </div>
          <TabStrip />
          <StatusBar />
        </div>
      </div>
      <Taskbar />
    </div>
  );
}
